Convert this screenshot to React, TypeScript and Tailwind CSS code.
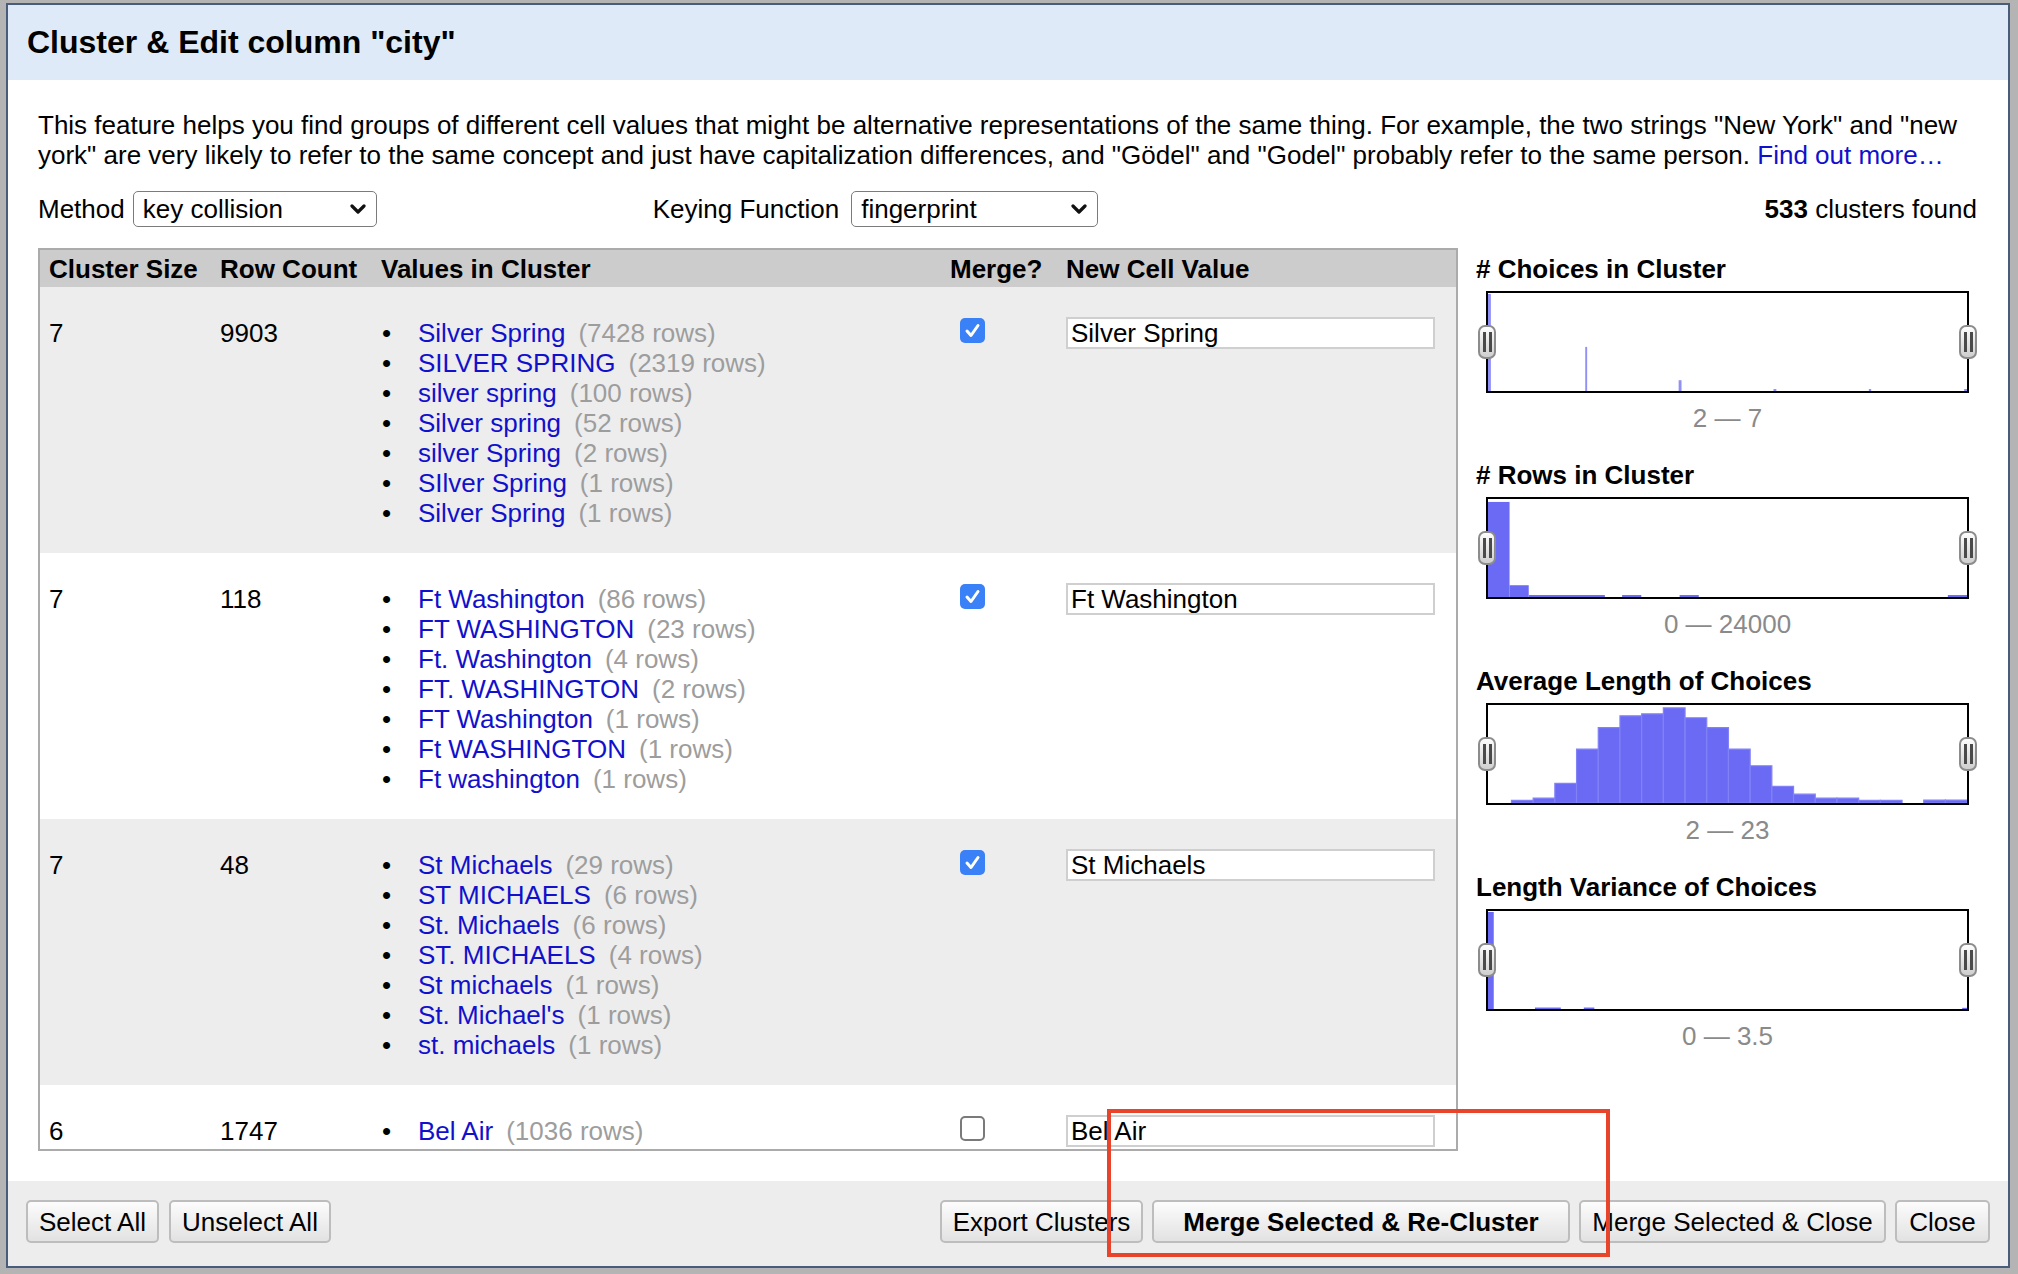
import React from "react";

type Cluster = {
  size: number;
  rows: number;
  values: [string, number][];
  merge: boolean;
  value: string;
};

const clusters: Cluster[] = [
  {
    size: 7,
    rows: 9903,
    merge: true,
    value: "Silver Spring",
    values: [
      ["Silver Spring", 7428],
      ["SILVER SPRING", 2319],
      ["silver spring", 100],
      ["Silver spring", 52],
      ["silver Spring", 2],
      ["SIlver Spring", 1],
      ["Silver Spring", 1],
    ],
  },
  {
    size: 7,
    rows: 118,
    merge: true,
    value: "Ft Washington",
    values: [
      ["Ft Washington", 86],
      ["FT WASHINGTON", 23],
      ["Ft. Washington", 4],
      ["FT. WASHINGTON", 2],
      ["FT Washington", 1],
      ["Ft WASHINGTON", 1],
      ["Ft washington", 1],
    ],
  },
  {
    size: 7,
    rows: 48,
    merge: true,
    value: "St Michaels",
    values: [
      ["St Michaels", 29],
      ["ST MICHAELS", 6],
      ["St. Michaels", 6],
      ["ST. MICHAELS", 4],
      ["St michaels", 1],
      ["St. Michael's", 1],
      ["st. michaels", 1],
    ],
  },
  {
    size: 6,
    rows: 1747,
    merge: false,
    value: "Bel Air",
    values: [["Bel Air", 1036]],
  },
];

function Checkbox({ checked }: { checked: boolean }) {
  if (checked) {
    return (
      <div className="ml-[10px] flex h-[25px] w-[25px] items-center justify-center rounded-[5px] bg-[#3a80f6]">
        <svg width="17" height="17" viewBox="0 0 17 17">
          <polyline
            points="3,9 7,13.5 14,3.5"
            fill="none"
            stroke="#ffffff"
            strokeWidth="3"
            strokeLinecap="round"
            strokeLinejoin="round"
          />
        </svg>
      </div>
    );
  }
  return (
    <div className="ml-[10px] h-[25px] w-[25px] rounded-[5px] border-2 border-[#7a7a7a] bg-white" />
  );
}

function Handle() {
  return (
    <div className="flex h-[34px] w-[18px] items-center justify-center gap-[3px] rounded-[7px] border-2 border-[#8c8c8c] bg-linear-to-b from-[#fdfdfd] to-[#cfcfcf]">
      <div className="h-[20px] w-[3px] bg-[#4a4a4a]" />
      <div className="h-[20px] w-[3px] bg-[#4a4a4a]" />
    </div>
  );
}

type Bar = [number, number, number];

function Histogram({ bars, color, stroke }: { bars: Bar[]; color: string; stroke?: string }) {
  return (
    <div className="relative ml-[10px] mt-[7px] h-[102px] w-[483px] border-2 border-black bg-white">
      <svg className="h-full w-full" viewBox="0 0 1000 100" preserveAspectRatio="none">
        {bars.map(([x0, x1, h], i) => (
          <rect
            key={i}
            x={x0 * 1000}
            y={100 - h * 100}
            width={(x1 - x0) * 1000}
            height={h * 100}
            fill={color}
            stroke={stroke ?? "none"}
            strokeWidth={stroke ? 1.2 : 0}
            vectorEffect="non-scaling-stroke"
          />
        ))}
      </svg>
      <div className="absolute left-[-10px] top-[32px]">
        <Handle />
      </div>
      <div className="absolute right-[-10px] top-[32px]">
        <Handle />
      </div>
    </div>
  );
}

const choicesBars: Bar[] = [
  [0, 0.006, 0.99],
  [0.203, 0.207, 0.45],
  [0.398, 0.404, 0.11],
  [0.596, 0.602, 0.02],
  [0.795, 0.8, 0.02],
  [0.994, 1.0, 0.02],
];

const rowsBars: Bar[] = [
  [0, 0.045, 0.97],
  [0.045, 0.085, 0.12],
  [0.085, 0.244, 0.02],
  [0.28, 0.32, 0.02],
  [0.4, 0.44, 0.02],
  [0.96, 1.0, 0.02],
];

const avgHeights = [
  0.026, 0.05, 0.2, 0.55, 0.77, 0.89, 0.91, 0.97, 0.87, 0.77, 0.55, 0.38, 0.17, 0.09, 0.05, 0.05,
  0.026, 0.026, 0.0, 0.03, 0.03,
];
const avgBars: Bar[] = avgHeights.map((h, i) => [0.049 + i * 0.0453, 0.049 + (i + 1) * 0.0453, h]);

const varBars: Bar[] = [
  [0, 0.012, 0.99],
  [0.098, 0.152, 0.015],
  [0.2, 0.222, 0.015],
  [0.99, 1.0, 0.012],
];

function Section({ title, bars, range, color, stroke, first }: { title: string; bars: Bar[]; range: string; color: string; stroke?: string; first?: boolean }) {
  return (
    <div className={first ? "" : "mt-[27px]"}>
      <div className="text-[26px] font-bold leading-[30px] text-black">{title}</div>
      <Histogram bars={bars} color={color} stroke={stroke} />
      <div className="ml-[10px] mt-[10px] w-[483px] text-center text-[26px] leading-[30px] text-[#8a8a8a]">
        {range}
      </div>
    </div>
  );
}

function Select({ label, width }: { label: string; width: string }) {
  return (
    <div
      className={`flex h-[36px] items-center justify-between rounded-[5px] border-[1.5px] border-[#7b7b7b] bg-white pl-[9px] pr-[10px] ${width}`}
    >
      <span className="text-[26px] leading-[30px] text-black">{label}</span>
      <svg width="16" height="12" viewBox="0 0 16 12">
        <polyline
          points="2,3 8,9 14,3"
          fill="none"
          stroke="#111111"
          strokeWidth="3.2"
          strokeLinecap="round"
          strokeLinejoin="round"
        />
      </svg>
    </div>
  );
}

function Button({ children, width, bold }: { children: React.ReactNode; width: string; bold?: boolean }) {
  return (
    <div
      className={`flex h-[43px] items-center justify-center rounded-[5px] border-2 border-[#bdbdbd] bg-linear-to-b from-[#fcfcfc] to-[#e2e2e2] text-[26px] leading-[30px] text-black ${width} ${bold ? "font-bold" : ""}`}
    >
      {children}
    </div>
  );
}

const cols = "grid grid-cols-[171px_161px_569px_116px_1fr]";

export default function App() {
  return (
    <div className="relative h-[1274px] w-[2018px] overflow-hidden bg-[#b4b4b4] pl-[6px] pt-[3px] font-['Liberation_Sans',Arial,Helvetica,sans-serif]">
      <div className="flex h-[1265px] w-[2004px] flex-col border-2 border-[#4a5c7c] bg-white">
        {/* Header */}
        <div className="flex h-[75px] shrink-0 items-center bg-[#dfeaf8] pl-[19px]">
          <h1 className="-mt-[2px] text-[32px] font-bold leading-[36px] text-black">Cluster &amp; Edit column "city"</h1>
        </div>

        {/* Body */}
        <div className="flex flex-1 flex-col pb-[30px] pl-[30px] pr-[31px] pt-[30px]">
          <p className="whitespace-nowrap text-[26px] leading-[30px] text-black">
            This feature helps you find groups of different cell values that might be alternative representations of the same thing. For example, the two strings "New York" and "new
            <br />
            york" are very likely to refer to the same concept and just have capitalization differences, and "Gödel" and "Godel" probably refer to the same person.{" "}
            <span className="text-[#1111cc]">Find out more…</span>
          </p>

          {/* Controls */}
          <div className="mt-[21px] flex h-[36px] items-center text-[26px] leading-[30px] text-black">
            <span>Method</span>
            <div className="ml-[8px]">
              <Select label="key collision" width="w-[244px]" />
            </div>
            <span className="ml-[276px]">Keying Function</span>
            <div className="ml-[12px]">
              <Select label="fingerprint" width="w-[247px]" />
            </div>
            <span className="ml-auto">
              <b>533</b> clusters found
            </span>
          </div>

          {/* Main */}
          <div className="mt-[21px] flex h-[903px] gap-[18px]">
            {/* Table */}
            <div className="h-[903px] w-[1420px] shrink-0 overflow-hidden border-2 border-[#ababab] bg-white">
              <div className={`${cols} h-[37px] items-center bg-[#cccccc] text-[26px] font-bold leading-[30px] text-black`}>
                <div className="px-[9px]">Cluster Size</div>
                <div className="px-[9px]">Row Count</div>
                <div className="px-[9px]">Values in Cluster</div>
                <div className="px-[9px]">Merge?</div>
                <div className="px-[9px]">New Cell Value</div>
              </div>
              {clusters.map((c, i) => (
                <div
                  key={i}
                  className={`${cols} items-start pb-[25px] pt-[31px] text-[26px] leading-[30px] text-black ${i % 2 === 0 ? "bg-[#ededed]" : "bg-white"}`}
                >
                  <div className="px-[9px]">{c.size}</div>
                  <div className="px-[9px]">{c.rows}</div>
                  <div className="px-[9px]">
                    <ul className="flex flex-col">
                      {c.values.map(([v, n], j) => (
                        <li key={j} className="flex whitespace-nowrap">
                          <span className="w-[37px] pl-[1px]">•</span>
                          <span className="text-[#1111cc]">{v}</span>
                          <span className="ml-[13px] text-[#9d9d9d]">({n} rows)</span>
                        </li>
                      ))}
                    </ul>
                  </div>
                  <div className="px-[9px]">
                    <Checkbox checked={c.merge} />
                  </div>
                  <div className="px-[9px]">
                    <div className="-mt-[1px] flex h-[32px] w-[369px] items-center border-2 border-[#cfcfcf] bg-white pl-[3px] text-[26px] text-black">
                      {c.value}
                    </div>
                  </div>
                </div>
              ))}
            </div>

            {/* Right panel */}
            <div className="flex-1 pt-[6px]">
              <Section first title="# Choices in Cluster" bars={choicesBars} range="2 — 7" color="#9090f7" />
              <Section title="# Rows in Cluster" bars={rowsBars} range="0 — 24000" color="#6a6af4" />
              <Section title="Average Length of Choices" bars={avgBars} range="2 — 23" color="#6a6af4" stroke="#8282f6" />
              <Section title="Length Variance of Choices" bars={varBars} range="0 — 3.5" color="#6a6af4" />
            </div>
          </div>
        </div>

        {/* Footer */}
        <div className="flex h-[85px] shrink-0 items-start bg-[#ededed] px-[18px] pt-[19px]">
          <div className="flex gap-[10px]">
            <Button width="w-[133px]">Select All</Button>
            <Button width="w-[162px]">Unselect All</Button>
          </div>
          <div className="ml-auto flex gap-[9px]">
            <Button width="w-[203px]">Export Clusters</Button>
            <Button width="w-[418px]" bold>
              Merge Selected &amp; Re-Cluster
            </Button>
            <Button width="w-[307px]">Merge Selected &amp; Close</Button>
            <Button width="w-[95px]">Close</Button>
          </div>
        </div>
      </div>

      {/* Annotation */}
      <div className="absolute left-[1107px] top-[1109px] h-[148px] w-[503px] border-4 border-[#e8442c]" />
    </div>
  );
}
